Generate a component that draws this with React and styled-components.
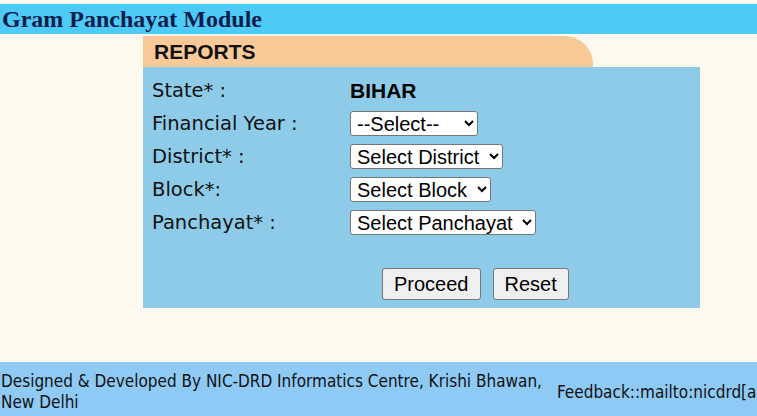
import React from "react";
import styled, { createGlobalStyle } from "styled-components";

const GlobalStyle = createGlobalStyle`
  html, body {
    margin: 0;
    padding: 0;
    background: #fdf9ee;
  }
  body {
    font-family: "DejaVu Sans", Verdana, sans-serif;
  }
`;

const Page = styled.div`
  width: 757px;
  height: 416px;
  display: flex;
  flex-direction: column;
  background: #fdf9ee;
  overflow: hidden;
`;

const Header = styled.div`
  margin-top: 4px;
  height: 30px;
  background: #4dcaf6;
  display: flex;
  align-items: center;
  padding-left: 2px;
  font-family: "Liberation Serif", "Times New Roman", serif;
  font-weight: bold;
  font-size: 24px;
  color: #0c1d4d;
`;

const Main = styled.div`
  flex: 1;
  padding: 2px 0 0 143px;
`;

const Box = styled.div`
  width: 557px;
`;

const Tab = styled.div`
  width: 450px;
  height: 31px;
  background: #f9ca97;
  border-top-right-radius: 28px;
  box-sizing: border-box;
  padding-left: 11px;
  display: flex;
  align-items: center;
  font-family: "Liberation Sans", Arial, sans-serif;
  font-weight: bold;
  font-size: 21px;
  color: #111;
`;

const Panel = styled.div`
  height: 241px;
  background: #8ecbe8;
  box-sizing: border-box;
  padding: 7px 0 0 9px;
  display: flex;
  flex-direction: column;
`;

const Row = styled.div`
  display: flex;
  align-items: center;
  height: 33px;
`;

const Label = styled.div`
  width: 198px;
  font-size: 19.5px;
  color: #111;
`;

const Value = styled.div`
  font-family: "Liberation Sans", Arial, sans-serif;
  font-weight: bold;
  font-size: 21px;
  color: #000;
`;

const Select = styled.select`
  font-family: "Liberation Sans", Arial, sans-serif;
  font-size: 20px;
  height: 25px;
  padding: 0 6px 0 2px;
  width: ${(p) => (p.$w ? p.$w + "px" : "auto")};
  background: #fff;
  color: #000;
  border: 1px solid #767676;
  border-radius: 3px;
`;

const Buttons = styled.div`
  display: flex;
  gap: 12px;
  margin-top: 29px;
  padding-left: 230px;
`;

const Button = styled.button`
  height: 32px;
  padding: 0 11px;
  font-family: "Liberation Sans", Arial, sans-serif;
  font-size: 20px;
  color: #000;
  background: #efefef;
  border: 1px solid #767676;
  border-radius: 3px;
`;

const Footer = styled.div`
  height: 54px;
  box-sizing: border-box;
  padding-top: 6px;
  background: #8ecaf4;
  display: flex;
  align-items: center;
  font-family: "DejaVu Sans Condensed", Tahoma, sans-serif;
  font-size: 17px;
  color: #111;
`;

const FootLeft = styled.div`
  width: 548px;
  padding-left: 1px;
  line-height: 21px;
  flex-shrink: 0;
`;

const FootRight = styled.div`
  padding-left: 8px;
  white-space: nowrap;
`;

const fields = [
  { label: "Financial Year :", option: "--Select--", w: 128 },
  { label: "District* :", option: "Select District" },
  { label: "Block*:", option: "Select Block" },
  { label: "Panchayat* :", option: "Select Panchayat" },
];

export default function App() {
  return (
    <Page>
      <GlobalStyle />
      <Header>Gram Panchayat Module</Header>
      <Main>
        <Box>
          <Tab>REPORTS</Tab>
          <Panel>
            <Row>
              <Label>State* :</Label>
              <Value>BIHAR</Value>
            </Row>
            {fields.map((f) => (
              <Row key={f.label}>
                <Label>{f.label}</Label>
                <Select $w={f.w} defaultValue="">
                  <option value="">{f.option}</option>
                </Select>
              </Row>
            ))}
            <Buttons>
              <Button>Proceed</Button>
              <Button>Reset</Button>
            </Buttons>
          </Panel>
        </Box>
      </Main>
      <Footer>
        <FootLeft>
          Designed &amp; Developed By NIC-DRD Informatics Centre, Krishi Bhawan,
          New Delhi
        </FootLeft>
        <FootRight>Feedback::mailto:nicdrd[at]nic[dot]in</FootRight>
      </Footer>
    </Page>
  );
}
